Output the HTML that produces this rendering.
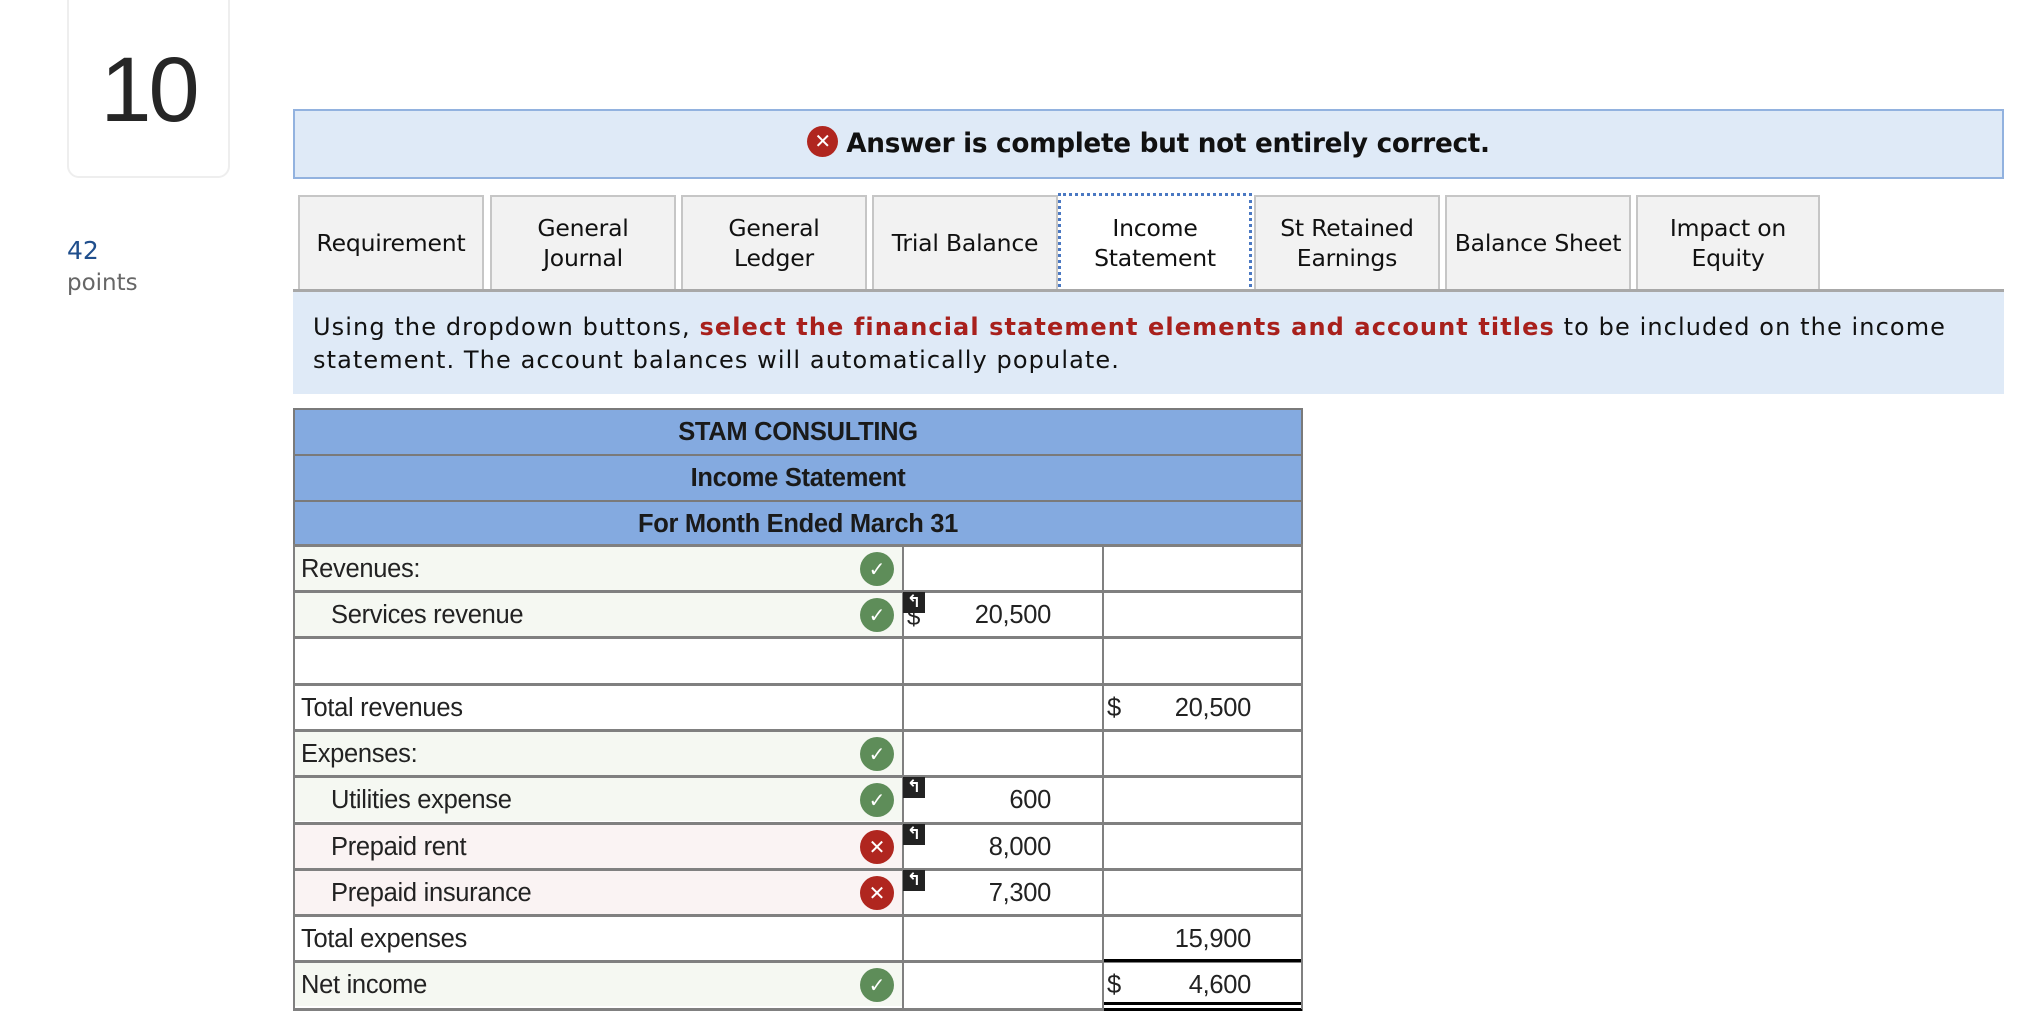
<!DOCTYPE html>
<html><head><meta charset="utf-8"><style>
*{margin:0;padding:0;box-sizing:border-box}
body{width:2042px;height:1014px;background:#fff;position:relative;overflow:hidden;font-family:"Liberation Sans",Arial,sans-serif;color:#222}
.a{position:absolute}
.qbox{left:67px;top:-12px;width:163px;height:190px;border:2px solid #eee;border-radius:12px;text-align:center;font-family:"Liberation Sans",sans-serif;font-size:92px;line-height:1;padding-top:54px;color:#262626;letter-spacing:-3px}
.banner{left:293px;top:109px;width:1711px;height:70px;background:#dfeaf7;border:2px solid #92b2df;font-family:"DejaVu Sans",sans-serif;font-weight:bold;font-size:26.3px;line-height:66px;text-align:center;color:#111;letter-spacing:-0.3px}
.xic{display:inline-block;width:31px;height:31px;border-radius:50%;background:#b0261f;color:#fff;font-size:20px;line-height:31px;text-align:center;vertical-align:middle;margin-right:8px;position:relative;top:-3px;font-family:"DejaVu Sans",sans-serif;letter-spacing:0}
.tab{top:195px;height:94px;background:#f2f2f2;border:2px solid #c6c6c6;border-bottom:none;font-family:"DejaVu Sans",sans-serif;font-size:23.5px;line-height:30px;display:flex;align-items:center;justify-content:center;text-align:center;color:#111;letter-spacing:-0.2px}
.sel{background:#fff;border:3px dotted #4a78c2;top:193px;height:100px}
.instr{left:293px;top:289px;width:1711px;height:105px;background:#dfeaf7;border-top:3px solid #a8a8a8;font-family:"DejaVu Sans",sans-serif;font-size:24px;letter-spacing:1.1px;line-height:33px;padding:19px 20px;color:#111;white-space:nowrap}
.instr b{color:#a8201c}
.hd{left:293px;width:1010px;height:46px;background:#84aae0;border:2px solid #7a7a7a;border-bottom:none;font-weight:bold;font-size:25.5px;text-align:center;line-height:44px;color:#1a1a1a;letter-spacing:-0.3px}
.hl{height:3px;background:#808080;left:293px;width:1010px}
.vl{width:2px;background:#808080;top:545px;height:464px}
.lab{left:295px;width:607px;height:43px;font-size:25.5px;line-height:45px;padding-left:6px;letter-spacing:-0.3px}
.ind{padding-left:36px}
.g{background:#f5f8f2}.r{background:#faf3f3}
.ic{width:34px;height:34px;border-radius:50%;color:#fff;text-align:center;font-size:20px;line-height:34px;left:860px;font-family:"DejaVu Sans",sans-serif;font-weight:bold}
.ok{background:#5e8d59}.no{background:#b0261f}
.arr{width:22px;height:21px;background:#222;left:903px;color:#fff;font-size:17px;line-height:21px;text-align:center;font-family:"DejaVu Sans",sans-serif;font-weight:bold}
.num{font-size:25.5px;text-align:right;line-height:45px;letter-spacing:-0.3px}
</style></head><body>
<div class="a qbox">10</div>
<div class="a" style="left:67px;top:236px;font-family:'DejaVu Sans',sans-serif;font-size:25px;color:#1f4e8c">42</div>
<div class="a" style="left:67px;top:270px;font-family:'DejaVu Sans',sans-serif;font-size:23px;color:#666">points</div>

<div class="a banner"><span class="xic">✕</span>Answer is complete but not entirely correct.</div>

<div class="a tab" style="left:298px;width:186px">Requirement</div>
<div class="a tab" style="left:490px;width:186px">General<br>Journal</div>
<div class="a tab" style="left:681px;width:186px">General<br>Ledger</div>
<div class="a tab" style="left:872px;width:186px">Trial Balance</div>
<div class="a tab sel" style="left:1058px;width:194px">Income<br>Statement</div>
<div class="a tab" style="left:1254px;width:186px">St Retained<br>Earnings</div>
<div class="a tab" style="left:1445px;width:186px">Balance Sheet</div>
<div class="a tab" style="left:1636px;width:184px">Impact on<br>Equity</div>

<div class="a instr">Using the dropdown buttons, <b>select the financial statement elements and account titles</b> to be included on the income<br>statement. The account balances will automatically populate.</div>

<div class="a hd" style="top:408px">STAM CONSULTING</div>
<div class="a hd" style="top:454px">Income Statement</div>
<div class="a hd" style="top:500px;height:47px">For Month Ended March 31</div>

<div class="a lab g" style="top:547px">Revenues:</div>
<div class="a lab g ind" style="top:593px">Services revenue</div>
<div class="a lab" style="top:686px">Total revenues</div>
<div class="a lab g" style="top:732px">Expenses:</div>
<div class="a lab g ind" style="top:778px">Utilities expense</div>
<div class="a lab r ind" style="top:825px">Prepaid rent</div>
<div class="a lab r ind" style="top:871px">Prepaid insurance</div>
<div class="a lab" style="top:917px">Total expenses</div>
<div class="a lab g" style="top:963px">Net income</div>

<div class="a hl" style="top:544px"></div>
<div class="a hl" style="top:590px"></div>
<div class="a hl" style="top:636px"></div>
<div class="a hl" style="top:683px"></div>
<div class="a hl" style="top:729px"></div>
<div class="a hl" style="top:775px"></div>
<div class="a hl" style="top:822px"></div>
<div class="a hl" style="top:868px"></div>
<div class="a hl" style="top:914px"></div>
<div class="a hl" style="top:960px"></div>
<div class="a hl" style="top:1008px"></div>
<div class="a" style="left:1104px;top:959px;width:198px;height:3px;background:#000"></div>
<div class="a" style="left:1104px;top:1002px;width:198px;height:3px;background:#000"></div>
<div class="a" style="left:1104px;top:1008px;width:198px;height:3px;background:#000"></div>

<div class="a vl" style="left:293px"></div>
<div class="a vl" style="left:902px"></div>
<div class="a vl" style="left:1102px"></div>
<div class="a vl" style="left:1301px"></div>

<div class="a ic ok" style="top:552px">✓</div>
<div class="a ic ok" style="top:598px">✓</div>
<div class="a ic ok" style="top:737px">✓</div>
<div class="a ic ok" style="top:783px">✓</div>
<div class="a ic no" style="top:830px">✕</div>
<div class="a ic no" style="top:876px">✕</div>
<div class="a ic ok" style="top:968px">✓</div>

<div class="a" style="left:907px;top:604px;font-size:24px">$</div>
<div class="a arr" style="top:592px">↰</div>
<div class="a arr" style="top:777px">↰</div>
<div class="a arr" style="top:824px">↰</div>
<div class="a arr" style="top:870px">↰</div>

<div class="a num" style="left:915px;width:136px;top:593px">20,500</div>
<div class="a num" style="left:915px;width:136px;top:778px">600</div>
<div class="a num" style="left:915px;width:136px;top:825px">8,000</div>
<div class="a num" style="left:915px;width:136px;top:871px">7,300</div>
<div class="a num" style="left:1107px;top:686px">$</div>
<div class="a num" style="left:1115px;width:136px;top:686px">20,500</div>
<div class="a num" style="left:1115px;width:136px;top:917px">15,900</div>
<div class="a num" style="left:1107px;top:963px">$</div>
<div class="a num" style="left:1115px;width:136px;top:963px">4,600</div>
</body></html>
